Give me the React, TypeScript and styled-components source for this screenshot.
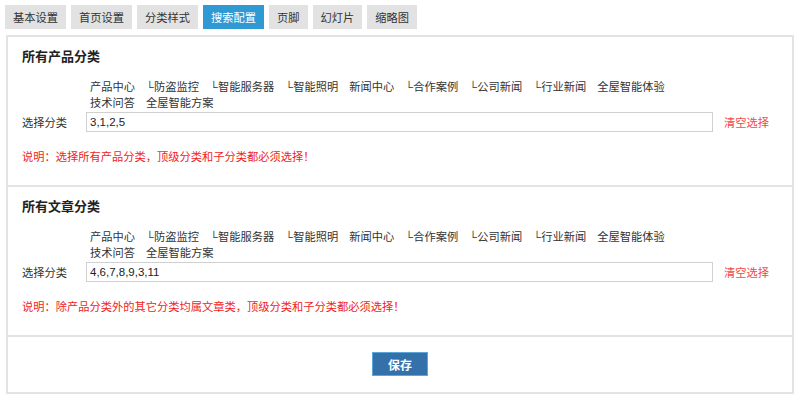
import React from "react";
import styled, { createGlobalStyle } from "styled-components";

const Global = createGlobalStyle`
  html, body { margin: 0; padding: 0; background: #fff; }
  body {
    font-family: "Liberation Sans", "Noto Sans CJK SC", sans-serif;
    font-size: 11.25px;
    color: #333;
  }
`;

const Page = styled.div`
  padding: 5px 6px 0 6px;
`;

const Tabs = styled.div`
  display: flex;
  gap: 5px;
  height: 24px;
  margin: 0 0 6px -1px;
`;

const Tab = styled.div<{ $active?: boolean }>`
  display: flex;
  align-items: center;
  padding: 0 8px;
  font-size: 11.25px;
  background: ${(p) => (p.$active ? "#2f99d4" : "#e2e2e2")};
  color: ${(p) => (p.$active ? "#fff" : "#333")};
`;

const Panel = styled.div`
  border: 2px solid #e3e3e3;
`;

const Section = styled.div`
  padding: 11px 16px 20px 14px;
  border-bottom: 2px solid #e3e3e3;
`;

const Title = styled.div`
  font-size: 13px;
  font-weight: bold;
  line-height: 18px;
  color: #222;
`;

const Form = styled.div`
  display: grid;
  grid-template-columns: 64px 627px auto;
  align-items: center;
  margin-top: 14px;
`;

const Cats = styled.div`
  grid-column: 2 / 4;
  width: 623px;
  padding-left: 4px;
  display: flex;
  flex-wrap: wrap;
  column-gap: 11px;
  line-height: 15.5px;
  margin-bottom: 1px;
  color: #333;
`;

const Cat = styled.span``;

const Label = styled.div`
  color: #333;
`;

const Input = styled.div`
  box-sizing: border-box;
  height: 20px;
  border: 1px solid #d0d0d0;
  padding: 0 3px;
  display: flex;
  align-items: center;
  font-size: 11.5px;
  color: #222;
`;

const Clear = styled.a`
  margin-left: 11px;
  color: #f44848;
  cursor: pointer;
`;

const Note = styled.div`
  margin-top: 17px;
  line-height: 16px;
  color: #f21c1c;
`;

const Footer = styled.div`
  display: flex;
  justify-content: center;
  padding: 15px 0 16px;
`;

const SaveButton = styled.button`
  box-sizing: border-box;
  width: 56px;
  height: 24px;
  background: #3470a9;
  border: 1px solid #5aa6d8;
  color: #fff;
  font-family: "Liberation Sans", "Noto Sans CJK SC", sans-serif;
  font-size: 12px;
  font-weight: bold;
  padding: 0;
`;

const tabs = ["基本设置", "首页设置", "分类样式", "搜索配置", "页脚", "幻灯片", "缩略图"];
const cats = [
  "产品中心",
  "└防盗监控",
  "└智能服务器",
  "└智能照明",
  "新闻中心",
  "└合作案例",
  "└公司新闻",
  "└行业新闻",
  "全屋智能体验",
  "技术问答",
  "全屋智能方案",
];

const Block = ({ title, value, note }: { title: string; value: string; note: string }) => (
  <Section>
    <Title>{title}</Title>
    <Form>
      <Cats>
        {cats.map((c) => (
          <Cat key={c}>{c}</Cat>
        ))}
      </Cats>
      <Label>选择分类</Label>
      <Input>{value}</Input>
      <Clear>清空选择</Clear>
    </Form>
    <Note>{note}</Note>
  </Section>
);

export default function App() {
  return (
    <Page>
      <Global />
      <Tabs>
        {tabs.map((t) => (
          <Tab key={t} $active={t === "搜索配置"}>
            {t}
          </Tab>
        ))}
      </Tabs>
      <Panel>
        <Block
          title="所有产品分类"
          value="3,1,2,5"
          note="说明：选择所有产品分类，顶级分类和子分类都必须选择！"
        />
        <Block
          title="所有文章分类"
          value="4,6,7,8,9,3,11"
          note="说明：除产品分类外的其它分类均属文章类，顶级分类和子分类都必须选择！"
        />
        <Footer>
          <SaveButton>保存</SaveButton>
        </Footer>
      </Panel>
    </Page>
  );
}
